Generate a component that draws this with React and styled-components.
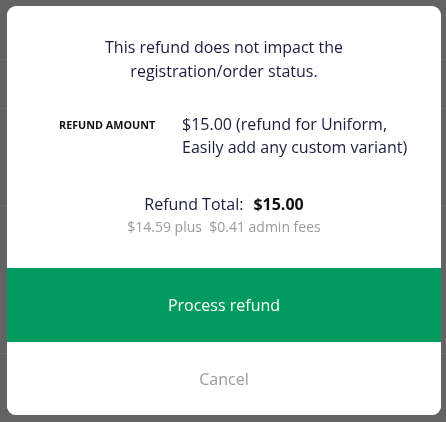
import styled, { createGlobalStyle } from "styled-components"

const Global = createGlobalStyle`
  html, body { margin: 0; padding: 0; }
  body {
    font-family: "Open Sans", "Liberation Sans", sans-serif;
    background: #636363;
  }
`

const Page = styled.div`
  height: 422px;
  overflow: hidden;
  background: #636363;
`

const PageRow = styled.div`
  height: ${p => p.$h}px;
  border-bottom: 1px solid #6b6b6b;
`

const Overlay = styled.div`
  position: fixed;
  inset: 0;
  display: flex;
  align-items: flex-start;
  padding: 6px 5px 0 7px;
`

const Modal = styled.div`
  width: 434px;
  height: 409px;
  background: #fff;
  border-radius: 9px;
  overflow: hidden;
  display: flex;
  flex-direction: column;
`

const Body = styled.div`
  flex: 1;
  display: flex;
  flex-direction: column;
  align-items: center;
  padding-top: 29px;
  color: #1c1d3e;
`

const Notice = styled.p`
  margin: 0;
  font-size: 16px;
  line-height: 24px;
  text-align: center;
`

const AmountRow = styled.div`
  align-self: stretch;
  display: grid;
  grid-template-columns: 123px 1fr;
  margin-top: 30px;
  padding: 0 10px 0 52px;
`

const Label = styled.div`
  font-size: 10.8px;
  font-weight: 700;
  line-height: 23px;
  color: #111;
`

const Value = styled.div`
  font-size: 16px;
  line-height: 23px;
`

const Total = styled.div`
  margin-top: 34px;
  font-size: 16px;
  line-height: 22px;

  strong {
    font-weight: 700;
    margin-left: 10px;
    color: #111;
  }
`

const Fees = styled.div`
  margin-top: 2px;
  font-size: 14px;
  line-height: 19px;
  color: #9a9a9a;
  white-space: pre;
`

const Action = styled.button`
  display: block;
  width: 100%;
  height: ${p => p.$h}px;
  border: 0;
  margin: 0;
  font-family: inherit;
  font-size: 16px;
  cursor: pointer;
  background: ${p => (p.$primary ? "#019a5f" : "#fff")};
  color: ${p => (p.$primary ? "#fff" : "#9a9a9a")};
`

export default function App() {
  return (
    <>
      <Global />
      <Page>
        <PageRow $h={59} />
        <PageRow $h={48} />
        <PageRow $h={96} />
        <PageRow $h={147} />
      </Page>
      <Overlay>
        <Modal>
          <Body>
            <Notice>
              This refund does not impact the
              <br />
              registration/order status.
            </Notice>
            <AmountRow>
              <Label>REFUND AMOUNT</Label>
              <Value>
                $15.00 (refund for Uniform,
                <br />
                Easily add any custom variant)
              </Value>
            </AmountRow>
            <Total>
              Refund Total:<strong>$15.00</strong>
            </Total>
            <Fees>{"$14.59 plus  $0.41 admin fees"}</Fees>
          </Body>
          <Action $primary $h={74}>Process refund</Action>
          <Action $h={73}>Cancel</Action>
        </Modal>
      </Overlay>
    </>
  )
}
